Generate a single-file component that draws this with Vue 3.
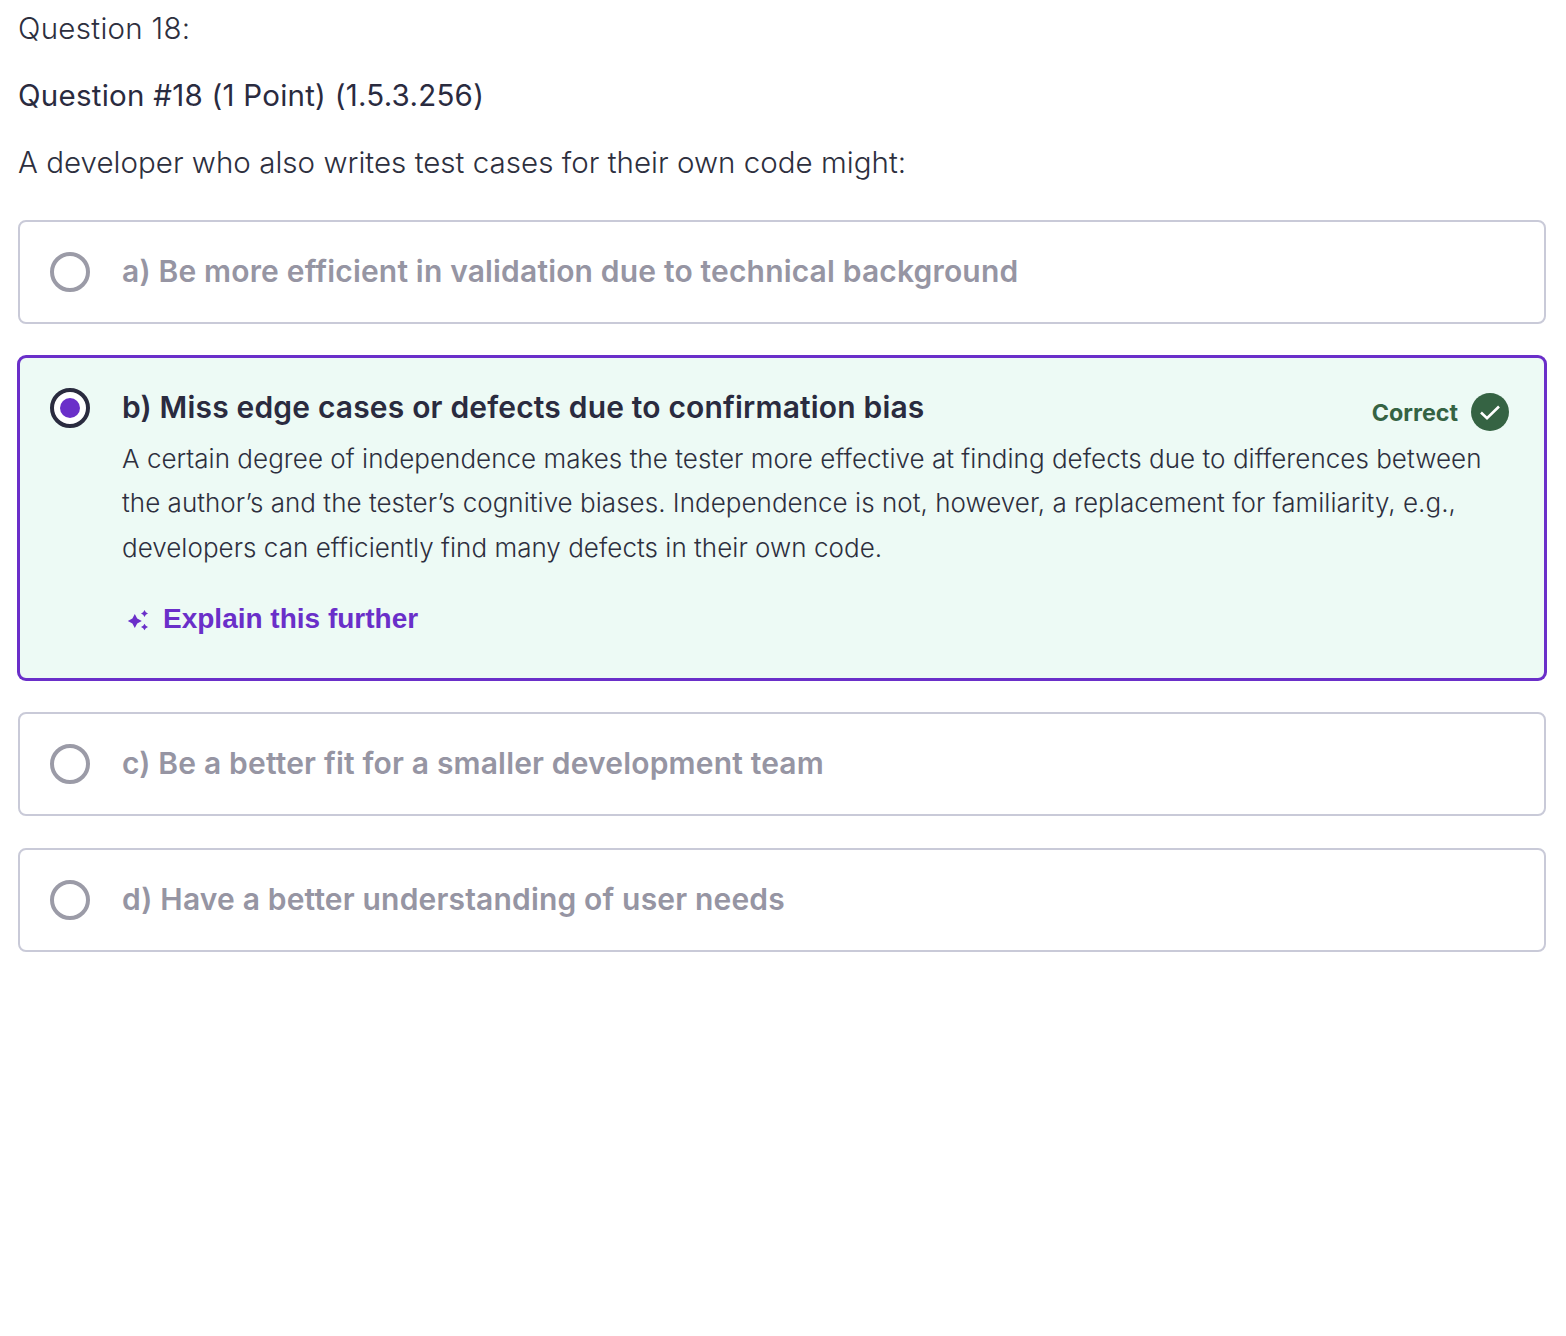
<script setup>
const answers = [
  { id: 'a', text: 'a) Be more efficient in validation due to technical background' },
  {
    id: 'b',
    text: 'b) Miss edge cases or defects due to confirmation bias',
    selected: true,
    explanation: 'A certain degree of independence makes the tester more effective at finding defects due to differences between the author’s and the tester’s cognitive biases. Independence is not, however, a replacement for familiarity, e.g., developers can efficiently find many defects in their own code.',
  },
  { id: 'c', text: 'c) Be a better fit for a smaller development team' },
  { id: 'd', text: 'd) Have a better understanding of user needs' },
]
</script>

<template>
  <main class="page">
    <div class="number">Question 18:</div>
    <div class="title">Question #18 (1 Point) (1.5.3.256)</div>
    <div class="prompt">A developer who also writes test cases for their own code might:</div>
    <div class="answers">
      <div v-for="a in answers" :key="a.id" class="card" :class="{ selected: a.selected }">
        <span class="radio"><span v-if="a.selected" class="dot"></span></span>
        <div class="body">
          <div class="head">
            <div class="answer">{{ a.text }}</div>
            <div v-if="a.selected" class="verdict">
              <span>Correct</span>
              <svg width="38" height="38" viewBox="0 0 38 38"><circle cx="19" cy="19" r="19" fill="#356343"/><path d="M10 19.5l6 5.6L28 13.5" fill="none" stroke="#fff" stroke-width="2.6"/></svg>
            </div>
          </div>
          <template v-if="a.selected">
            <p class="explanation">{{ a.explanation }}</p>
            <div class="further">
              <svg width="24" height="24" viewBox="0 0 24 24" fill="#6a2fc9"><path d="M8.8 7l2.4 4.6 4.6 2.4-4.6 2.4-2.4 4.6-2.4-4.6L1.8 14l4.6-2.4z"/><path d="M18.5 3l1.3 2.2 2.2 1.3-2.2 1.3L18.5 10l-1.3-2.2L15 6.500l2.200-1.300z"/><path d="M18.500 16.700l1.300 2 2.200 1.300-2.200 1.300-1.300 2-1.300-2L15 20l2.200-1.300z"/></svg>
              <span>Explain this further</span>
            </div>
          </template>
        </div>
      </div>
    </div>
  </main>
</template>

<style>
html, body { background: #fff; }
</style>

<style scoped>
.page {
  box-sizing: border-box;
  height: 1336px;
  padding: 9px 20px 0 18px;
  font-family: Inter, "Liberation Sans", sans-serif;
}
.number, .title, .prompt {
  font-size: 29.5px;
  line-height: 38px;
  font-weight: 300;
}
.number { color: #2d2f3e; letter-spacing: 0.3px; }
.prompt { color: #2d2f3e; letter-spacing: 0.03px; margin-top: 29px; }
.title { margin-top: 29px; font-weight: 400; color: #2a2b3f; letter-spacing: 0.25px; }
.answers {
  margin-top: 39px;
  display: flex;
  flex-direction: column;
  gap: 32px;
}
.card {
  box-sizing: border-box;
  display: flex;
  gap: 32px;
  min-height: 104px;
  padding: 30px 35px 30px 30px;
  border: 2px solid #c9cad8;
  border-radius: 8px;
  color: #9695a3;
  background: #fff;
}
.card.selected {
  border-color: #6a2fc9;
  box-shadow: 0 0 0 1px #6a2fc9;
  background: #edfaf5;
  color: #2a2b3f;
  height: 324px;
}
.radio {
  box-sizing: border-box;
  flex: none;
  width: 40px;
  height: 40px;
  border: 4px solid #9b9ba7;
  border-radius: 50%;
  display: flex;
  align-items: center;
  justify-content: center;
}
.selected .radio { border-color: #2a2b3f; background: #fff; }
.dot { width: 20px; height: 20px; border-radius: 50%; background: #6a2fc9; }
.body { flex: 1; min-width: 0; }
.head { display: flex; justify-content: space-between; }
.answer {
  font-size: 30px;
  line-height: 38px;
  font-weight: 600;
  letter-spacing: 0.17px;
}
.verdict {
  display: flex;
  align-items: center;
  gap: 13px;
  height: 38px;
  margin-top: 5px;
  margin-bottom: -2px;
  font-size: 23.3px;
  font-weight: 700;
  color: #356343;
}
.explanation {
  margin: 7.5px 0 0;
  font-size: 26px;
  line-height: 44.5px;
  font-weight: 300;
  letter-spacing: 0.03px;
  color: #2d2f3e;
}
.further {
  display: flex;
  align-items: center;
  gap: 13px;
  margin-top: 28.5px;
  margin-left: 4px;
  height: 40px;
  font-family: "Liberation Sans", Arial, sans-serif;
  font-size: 28px;
  font-weight: 700;
  color: #6a2fc9;
}
</style>
